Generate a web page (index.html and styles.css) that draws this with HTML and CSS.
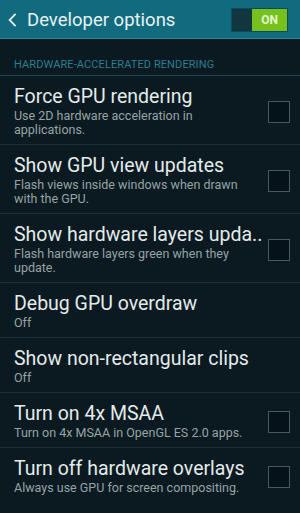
FILE: index.html
```html
<!DOCTYPE html>
<html>
<head>
<meta charset="utf-8">
<link rel="stylesheet" href="styles.css">
</head>
<body>
<div class="screen">
  <header class="appbar">
    <div class="back">
      <svg width="9" height="14" viewBox="0 0 9 14"><path d="M7.6 0.8 L1.6 7 L7.6 13.2" fill="none" stroke="#dfeef2" stroke-width="1.8"/></svg>
    </div>
    <div class="title">Developer options</div>
    <div class="toggle"><span class="off"></span><span class="on">ON</span></div>
  </header>
  <div class="section">HARDWARE-ACCELERATED RENDERING</div>
  <div class="list">
    <div class="row">
      <div class="text"><div class="t">Force GPU rendering</div><div class="s">Use 2D hardware acceleration in<br>applications.</div></div>
      <div class="check"></div>
    </div>
    <div class="row">
      <div class="text"><div class="t">Show GPU view updates</div><div class="s">Flash views inside windows when drawn<br>with the GPU.</div></div>
      <div class="check"></div>
    </div>
    <div class="row">
      <div class="text"><div class="t">Show hardware layers upda..</div><div class="s">Flash hardware layers green when they<br>update.</div></div>
      <div class="check"></div>
    </div>
    <div class="row">
      <div class="text"><div class="t">Debug GPU overdraw</div><div class="s">Off</div></div>
    </div>
    <div class="row">
      <div class="text"><div class="t">Show non-rectangular clips</div><div class="s">Off</div></div>
    </div>
    <div class="row">
      <div class="text"><div class="t">Turn on 4x MSAA</div><div class="s">Turn on 4x MSAA in OpenGL ES 2.0 apps.</div></div>
      <div class="check"></div>
    </div>
    <div class="row last">
      <div class="text"><div class="t">Turn off hardware overlays</div><div class="s">Always use GPU for screen compositing.</div></div>
      <div class="check"></div>
    </div>
  </div>
</div>
</body>
</html>
```
FILE: styles.css
```css
html, body {
  margin: 0;
  padding: 0;
  background: #0a1a20;
}
.screen {
  width: 300px;
  height: 513px;
  overflow: hidden;
  background: #0a1a20;
  font-family: Roboto, "Noto Sans", sans-serif;
}
.appbar {
  height: 38px;
  background: #116a7e;
  border-bottom: 1px solid #2a8598;
  display: flex;
  align-items: center;
}
.back {
  width: 27px;
  padding-left: 8px;
  box-sizing: border-box;
  display: flex;
  margin-top: 2px;
}
.title {
  flex: 1;
  color: #e6f2f4;
  font-size: 18.5px;
  margin-top: 1px;
}
.toggle {
  width: 55px;
  height: 22px;
  margin-right: 12px;
  margin-top: 1px;
  border: 1px solid #0b4d5c;
  display: flex;
  background: #133a45;
}
.toggle .off {
  width: 20px;
  background: #123640;
}
.toggle .on {
  flex: 1;
  background: #77c11f;
  color: #e4f5cf;
  font-size: 12px;
  font-weight: bold;
  display: flex;
  align-items: center;
  justify-content: center;
}
.section {
  margin-top: 19px;
  padding-left: 14px;
  height: 14px;
  line-height: 14px;
  font-size: 11px;
  color: #2c7e93;
  border-bottom: 1px solid #1c4a56;
  padding-bottom: 3px;
  letter-spacing: 0.1px;
}
.row {
  display: flex;
  align-items: center;
  padding: 9px 10px 7px 14px;
  border-bottom: 1px solid #1f3036;
}
.row.last {
  border-bottom: none;
}
.text {
  flex: 1;
}
.t {
  color: #e4eaeb;
  font-size: 19.5px;
  line-height: 24px;
  white-space: nowrap;
}
.s {
  color: #97a3a6;
  font-size: 12.5px;
  line-height: 14px;
  white-space: nowrap;
}
.check {
  width: 20px;
  height: 20px;
  border: 1px solid #4a585c;
  background: #061219;
  flex: none;
  margin-top: 1px;
}
```
